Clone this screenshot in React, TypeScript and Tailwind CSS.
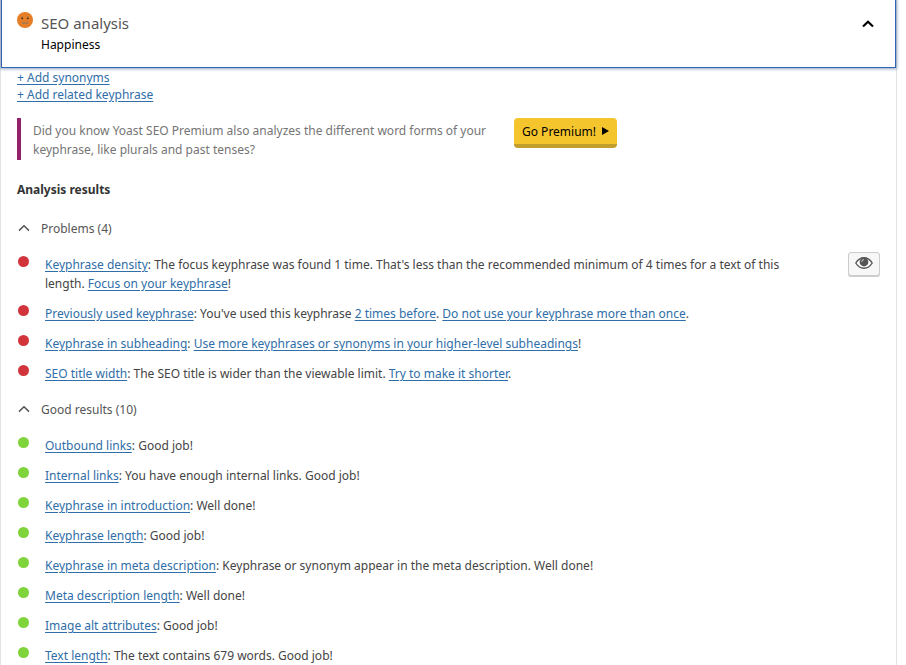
import React, { useState } from 'react';

interface Result {
  id: string;
  link: string;
  body: React.ReactNode;
  marker?: boolean;
}

function TextLink({ children }: { children: React.ReactNode }) {
  return (
    <a href="#" className="text-[#2f6ea8] underline underline-offset-2">
      {children}
    </a>
  );
}

const problems: Result[] = [
  {
    id: 'density',
    link: 'Keyphrase density',
    body: (
      <>
        : The focus keyphrase was found 1 time. That's less than the recommended minimum of 4 times for a text of this
        length. <TextLink>Focus on your keyphrase</TextLink>!
      </>
    ),
    marker: true,
  },
  {
    id: 'previously-used',
    link: 'Previously used keyphrase',
    body: (
      <>
        : You've used this keyphrase <TextLink>2 times before</TextLink>.{' '}
        <TextLink>Do not use your keyphrase more than once</TextLink>.
      </>
    ),
  },
  {
    id: 'subheading',
    link: 'Keyphrase in subheading',
    body: (
      <>
        : <TextLink>Use more keyphrases or synonyms in your higher-level subheadings</TextLink>!
      </>
    ),
  },
  {
    id: 'title-width',
    link: 'SEO title width',
    body: (
      <>
        : The SEO title is wider than the viewable limit. <TextLink>Try to make it shorter</TextLink>.
      </>
    ),
  },
];

const goodResults: Result[] = [
  { id: 'outbound', link: 'Outbound links', body: ': Good job!' },
  { id: 'internal', link: 'Internal links', body: ': You have enough internal links. Good job!' },
  { id: 'introduction', link: 'Keyphrase in introduction', body: ': Well done!' },
  { id: 'length', link: 'Keyphrase length', body: ': Good job!' },
  {
    id: 'meta-description',
    link: 'Keyphrase in meta description',
    body: ': Keyphrase or synonym appear in the meta description. Well done!',
  },
  { id: 'meta-length', link: 'Meta description length', body: ': Well done!' },
  { id: 'image-alt', link: 'Image alt attributes', body: ': Good job!' },
  { id: 'text-length', link: 'Text length', body: ': The text contains 679 words. Good job!' },
];

function NeutralFace() {
  return (
    <svg width="16" height="16" viewBox="0 0 16 16" aria-hidden="true">
      <circle cx="8" cy="8" r="8" fill="#e57e26" />
      <path d="M4 4.6h2.2M9.800 4.600h2.200" stroke="#a8804f" strokeWidth="0.7" />
      <circle cx="5.200" cy="6.300" r="0.900" fill="#2f2d2b" />
      <circle cx="10.800" cy="6.300" r="0.900" fill="#2f2d2b" />
      <path d="M4.800 11h6.400" stroke="#a07a55" strokeWidth="1.500" />
    </svg>
  );
}

function Chevron({ bold, open }: { bold?: boolean; open: boolean }) {
  return (
    <svg width="12" height="8" viewBox="0 0 12 8" aria-hidden="true" className={open ? '' : 'rotate-180'}>
      <path d="M1 6.6L6 1.7l5 4.9" fill="none" stroke="currentColor" strokeWidth={bold ? 2.1 : 1.5} />
    </svg>
  );
}

function EyeIcon() {
  return (
    <svg width="18" height="12" viewBox="0 0 18 12" aria-hidden="true">
      <path
        d="M0.8 6C3 2.5 5.8 0.8 9 0.8S15 2.5 17.2 6C15 9.5 12.2 11.2 9 11.2S3 9.5 0.8 6z"
        fill="#fff"
        stroke="#555"
        strokeWidth="1.4"
      />
      <circle cx="9" cy="5" r="4.4" fill="#555" />
      <path d="M6.8 4.8a2.3 2.3 0 0 1 2-2.3" fill="none" stroke="#ddd" strokeWidth="1" />
    </svg>
  );
}

function ResultGroup({ title, color, results }: { title: string; color: string; results: Result[] }) {
  const [open, setOpen] = useState(true);

  return (
    <section>
      <h3>
        <button
          type="button"
          aria-expanded={open}
          onClick={() => setOpen((prev) => !prev)}
          className="flex h-9 w-full items-center gap-[11px] pl-px text-left text-[#555]"
        >
          <Chevron open={open} />
          {title}
        </button>
      </h3>
      {open && (
        <ul className="flex flex-col gap-[11px] pt-[9px] pb-2">
          {results.map((result) => (
            <li key={result.id} className="flex items-start">
              <span className={`mt-px ml-px size-[11px] shrink-0 rounded-full ${color}`} />
              <p className="ml-4 flex-1 pr-12">
                <TextLink>{result.link}</TextLink>
                {result.body}
              </p>
              {result.marker && (
                <button
                  type="button"
                  aria-label="Highlight this result in the text"
                  className="-mt-[3px] flex h-6 w-8 items-center justify-center rounded-[3px] border border-[#ccc] bg-[#f7f7f7] pb-0.5 shadow-[0_1px_0_#ccc]"
                >
                  <EyeIcon />
                </button>
              )}
            </li>
          ))}
        </ul>
      )}
    </section>
  );
}

export default function App() {
  const [open, setOpen] = useState(true);

  return (
    <div className="min-h-screen bg-white pr-[9px] font-['Noto_Sans','Open_Sans',sans-serif] text-[12px] leading-[19px] text-[#444]">
      <div className="min-h-screen border-x border-[#e2e4e7]">
        <button
          type="button"
          aria-expanded={open}
          onClick={() => setOpen((prev) => !prev)}
          className="flex h-[68px] w-full items-start border-x border-b border-[#3461b8] bg-white pt-3 pr-[21px] pl-[15px] text-left shadow-[0_0_3px_1px_rgba(70,105,140,0.6)]"
        >
          <NeutralFace />
          <span className="ml-2 flex-1">
            <span className="block text-[15px] leading-[23px] text-[#555]">SEO analysis</span>
            <span className="block text-black">Happiness</span>
          </span>
          <span className="pt-2 text-black">
            <Chevron bold open={open} />
          </span>
        </button>

        {open && (
          <div className="px-4">
            <div className="flex flex-col items-start pt-px leading-[17px]">
              <TextLink>+ Add synonyms</TextLink>
              <TextLink>+ Add related keyphrase</TextLink>
            </div>

            <div className="mt-[15px] flex items-start gap-4">
              <p className="w-[481px] border-l-4 border-[#93216b] pt-[3px] pb-px pl-3 text-[#757575]">
                Did you know Yoast SEO Premium also analyzes the different word forms of your keyphrase, like plurals
                and past tenses?
              </p>
              <a
                href="#"
                className="flex h-[30px] items-center gap-1.5 rounded border-b-4 border-[#c29e2c] bg-[#f5c52e] px-2 text-black"
              >
                Go Premium!
                <svg width="7" height="8" viewBox="0 0 7 8" aria-hidden="true">
                  <path d="M0 0l7 4-7 4z" fill="currentColor" />
                </svg>
              </a>
            </div>

            <h2 className="mt-5 mb-[11px] font-bold text-[#333]">Analysis results</h2>

            <ResultGroup title="Problems (4)" color="bg-[#d1353b]" results={problems} />
            <ResultGroup title="Good results (10)" color="bg-[#7fd33b]" results={goodResults} />
          </div>
        )}
      </div>
    </div>
  );
}
